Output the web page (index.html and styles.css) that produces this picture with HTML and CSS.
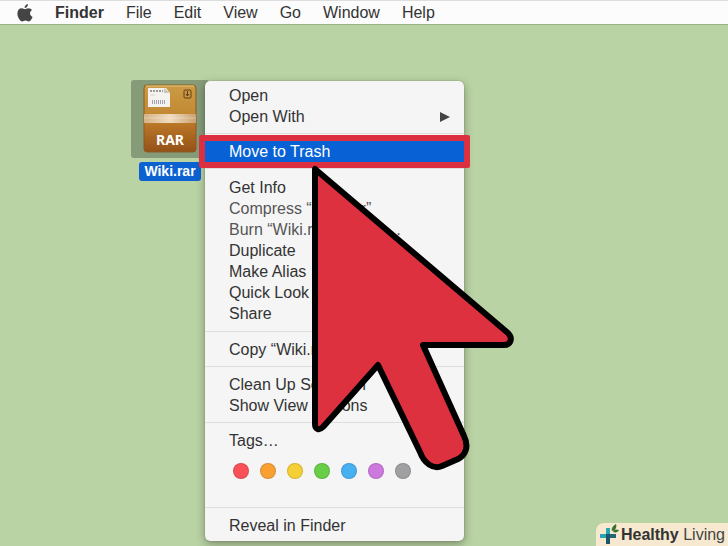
FILE: index.html
```html
<!DOCTYPE html>
<html lang="en">
<head>
    <meta charset="UTF-8">
    <meta name="viewport" content="width=device-width, initial-scale=1.0">
    <title>Finder</title>
    <link rel="stylesheet" href="styles.css">
</head>
<body>
    <nav class="menu-bar">
        <button class="apple" aria-label="Apple">
            <svg width="16" height="18" viewBox="0 0 16 18">
                <path d="M11 0c.2 2-1.500 4-3.400 4C7.300 2.200 9 .3 11 0z"/>
                <path d="M8 5.200c.8 0 1.800-1 3.500-1 1.300 0 2.700.7 3.500 1.900-2.900 1.700-2.400 5.700.6 6.900-.8 2-2.200 4.400-3.800 4.400-1.300 0-1.800-.8-3.300-.8s-2 .8-3.300.8C3 17.400.4 13.200.4 9.500c0-3.400 2.100-5.200 4.200-5.200C6 4.300 7.200 5.200 8 5.200z"/>
            </svg>
        </button>
        <button class="app-name">Finder</button>
        <button>File</button>
        <button>Edit</button>
        <button>View</button>
        <button>Go</button>
        <button>Window</button>
        <button>Help</button>
    </nav>

    <main class="desktop">
        <figure class="file">
            <div class="file-icon">
                <svg width="54" height="70" viewBox="0 0 54 70">
                    <defs>
                        <linearGradient id="box" x1="0" y1="0" x2="0" y2="1">
                            <stop offset="0" stop-color="#cc9b45"/>
                            <stop offset=".5" stop-color="#c08630"/>
                            <stop offset=".6" stop-color="#b87527"/>
                            <stop offset="1" stop-color="#945117"/>
                        </linearGradient>
                        <linearGradient id="tape" x1="0" y1="0" x2="1" y2="0">
                            <stop offset="0" stop-color="#d5b184"/>
                            <stop offset=".5" stop-color="#f0dcc0"/>
                            <stop offset="1" stop-color="#cba171"/>
                        </linearGradient>
                    </defs>
                    <rect x="1" y="1" width="52" height="67" rx="3" fill="url(#box)" stroke="#8a5a22"/>
                    <path d="M3 2h48" stroke="#e6c47e"/>
                    <path d="M5 4h18l4 5v14H5z" fill="#f5f3f0"/>
                    <path d="M21 4v5h6z" fill="#c9c5bd"/>
                    <path d="M7 7h13" stroke="#9a9a9a" stroke-width="2" stroke-dasharray="2 1"/>
                    <path d="M7 11h5" stroke="#d5d5d5"/>
                    <path d="M9 18h14" stroke="#a3a3ad" stroke-width="4" stroke-dasharray="1 1"/>
                    <rect x="41" y="6" width="7" height="8" rx="1" fill="none" stroke="#5e401a"/>
                    <path d="M44.500 7v5M43 10l1.500 2L46 10" fill="none" stroke="#5e401a"/>
                    <rect x="1" y="30" width="52" height="9" fill="url(#tape)"/>
                    <path d="M1 34h52" stroke="#fff" stroke-opacity=".3"/>
                    <text x="27" y="61" text-anchor="middle" class="file-type">RAR</text>
                </svg>
            </div>
            <figcaption>Wiki.rar</figcaption>
        </figure>

        <div class="context-menu">
            <section>
                <button>Open</button>
                <button class="submenu">Open With
                    <svg width="10" height="12" viewBox="0 0 10 12"><path d="M0 1l10 5-10 5z"/></svg>
                </button>
            </section>
            <section>
                <button class="selected">Move to Trash</button>
            </section>
            <section class="file-actions">
                <button>Get Info</button>
                <button class="dim">Compress “Wiki.rar”</button>
                <button class="dim">Burn “Wiki.rar” to Disc…</button>
                <button>Duplicate</button>
                <button>Make Alias</button>
                <button>Quick Look</button>
                <button>Share</button>
            </section>
            <section>
                <button>Copy “Wiki.rar”</button>
            </section>
            <section>
                <button>Clean Up Selection</button>
                <button>Show View Options</button>
            </section>
            <section>
                <button>Tags…</button>
                <div class="tags">
                    <button class="tag red" aria-label="Red"></button>
                    <button class="tag orange" aria-label="Orange"></button>
                    <button class="tag yellow" aria-label="Yellow"></button>
                    <button class="tag green" aria-label="Green"></button>
                    <button class="tag blue" aria-label="Blue"></button>
                    <button class="tag purple" aria-label="Purple"></button>
                    <button class="tag gray" aria-label="Gray"></button>
                </div>
            </section>
            <section>
                <button>Reveal in Finder</button>
            </section>
        </div>

        <svg class="pointer" width="210" height="320" viewBox="0 0 210 320">
            <path d="M10 9V264C10 269 14 271 18 267L73 205L115 292C119 303 128 310 137 306L153 299C161 295 164 286 159 276L118 185H199C206 185 208 178 203 173Z"/>
        </svg>
    </main>

    <a class="brand" href="#">
        <svg width="22" height="22" viewBox="0 0 22 22">
            <path d="M9 4v8" stroke="#27a5b3" stroke-width="4"/>
            <path d="M1 12h8" stroke="#27a5b3" stroke-width="4"/>
            <path d="M9 12h8" stroke="#226478" stroke-width="4"/>
            <path d="M9 10v10" stroke="#1b5669" stroke-width="4"/>
            <path d="M13 7c-1-3 1-5 4-7 1 3 0 6-4 7zM14 8c1-3 3-3 6-2-1 2-3 3-6 2z" fill="#39722f"/>
        </svg>
        <span><b>Healthy</b> Living</span>
    </a>
</body>
</html>
```
FILE: styles.css
```css
* {
    box-sizing: border-box;
}
body {
    font-family: "Liberation Sans", Arial, sans-serif;
    font-size: 16px;
    margin: 0;
    min-height: 100vh;
    background: #bad3a4;
    color: #333;
    position: relative;
    overflow: hidden;
}
button {
    font: inherit;
    color: inherit;
    background: none;
    border: none;
    padding: 0;
    text-align: left;
}
.menu-bar {
    display: flex;
    align-items: center;
    gap: 22px;
    height: 25px;
    padding-left: 17px;
    background: #fcfcfc;
    border-top: 1px solid #ddd;
    border-bottom: 1px solid #9bb288;
}
.menu-bar button {
    line-height: 22px;
}
.apple {
    display: flex;
}
.apple svg {
    fill: #444;
}
.menu-bar .app-name {
    font-weight: bold;
}

/* Desktop file */
.file {
    position: absolute;
    left: 131px;
    top: 80px;
    margin: 0;
    display: flex;
    flex-direction: column;
    align-items: center;
    gap: 4px;
}
.file-icon {
    background: #869c79;
    border-radius: 3px;
    padding: 4px 12px;
}
.file-icon svg {
    display: block;
}
.file-type {
    font: bold 14px "Noto Sans", sans-serif;
    fill: #fff;
}
.file figcaption {
    background: #0d62d2;
    border-radius: 3px;
    color: #fff;
    font-size: 14px;
    font-weight: bold;
    line-height: 19px;
    padding: 0 5px;
}

/* Context menu */
.context-menu {
    position: absolute;
    left: 205px;
    top: 81px;
    width: 259px;
    padding: 4px 0 5px;
    background: #f5f5f5;
    border-radius: 5px;
    box-shadow: 0 3px 10px rgba(0, 0, 0, 0.35), 0 0 1px rgba(0, 0, 0, 0.5);
}
.context-menu section {
    display: flex;
    flex-direction: column;
}
.context-menu section + section {
    border-top: 1px solid #dedede;
    margin-top: 6px;
    padding-top: 7px;
}
.context-menu section.file-actions {
    padding: 8px 0 1px;
}
.context-menu section > button {
    line-height: 21px;
    padding: 0 14px 0 24px;
}
.submenu {
    display: flex;
    justify-content: space-between;
    align-items: center;
}
.submenu svg {
    fill: #444;
}
.dim {
    color: #555;
}
.selected {
    position: relative;
    background: #0862d6;
    color: #fff;
}
.selected::after {
    content: "";
    position: absolute;
    inset: -6px;
    border: 6px solid #dc3040;
    border-radius: 2px;
}
.tags {
    display: flex;
    gap: 11px;
    padding: 12px 28px 22px;
}
.tag {
    width: 16px;
    height: 16px;
    border-radius: 50%;
    border: 1px solid rgba(0, 0, 0, 0.12);
}
.red { background: #fa5057; }
.orange { background: #f8a032; }
.yellow { background: #f4cf35; }
.green { background: #68cd47; }
.blue { background: #46b0f0; }
.purple { background: #cc78dd; }
.gray { background: #a0a0a2; }

.pointer {
    position: absolute;
    left: 305px;
    top: 160px;
    fill: #de3140;
    stroke: #000;
    stroke-width: 6;
    stroke-linejoin: round;
    pointer-events: none;
}

.brand {
    position: absolute;
    right: 0;
    bottom: 0;
    display: flex;
    align-items: center;
    padding: 0 3px;
    line-height: 23px;
    background: #f6e9d0;
    border-top-left-radius: 8px;
    color: #444;
    text-decoration: none;
}
.brand b {
    color: #333;
}
```
